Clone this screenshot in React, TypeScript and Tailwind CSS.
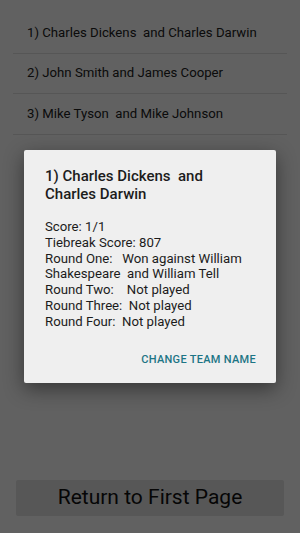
export default function App() {
  const teams = [
    '1) Charles Dickens  and Charles Darwin',
    '2) John Smith and James Cooper',
    '3) Mike Tyson  and Mike Johnson',
  ];

  return (
    <div className="relative w-[300px] h-[533px] bg-white overflow-hidden font-['Roboto',sans-serif] text-[#212121]">
      {/* underlying page */}
      <div className="flex flex-col h-full">
        <div className="pt-[13px] px-[13px]">
          {teams.map((t) => (
            <div key={t} className="h-[40.5px] flex items-center pl-[14px] border-b border-[#e2e2e2] text-[13.2px] whitespace-pre">
              {t}
            </div>
          ))}
        </div>
        <div className="flex-1" />
        <div className="px-[16px] pb-[17px]">
          <button className="w-full h-[36px] bg-[#e4e4e4] rounded-[2px] text-[21px] text-[#111]">
            Return to First Page
          </button>
        </div>
      </div>

      {/* dim overlay + dialog */}
      <div className="absolute inset-0 bg-black/[0.62] flex items-center justify-center">
        <div className="w-[252px] bg-[#efefef] rounded-[2px] shadow-[0_6px_20px_rgba(0,0,0,0.45)] pt-[17px] pb-[14px]">
          <div className="px-[21px] text-[15px] font-medium leading-[18px] whitespace-pre-wrap text-[#1c1c1c]">
            {'1) Charles Dickens  and\nCharles Darwin'}
          </div>
          <div className="px-[21px] mt-[16px] text-[13.2px] leading-[15.7px] whitespace-pre text-[#1c1c1c]">
            {'Score: 1/1\nTiebreak Score: 807\nRound One:   Won against William\nShakespeare  and William Tell\nRound Two:    Not played\nRound Three:  Not played\nRound Four:  Not played'}
          </div>
          <div className="flex justify-end px-[20px] mt-[23px]">
            <button className="text-[11px] font-medium tracking-[0.3px] text-[#1d7585]">CHANGE TEAM NAME</button>
          </div>
        </div>
      </div>
    </div>
  );
}
